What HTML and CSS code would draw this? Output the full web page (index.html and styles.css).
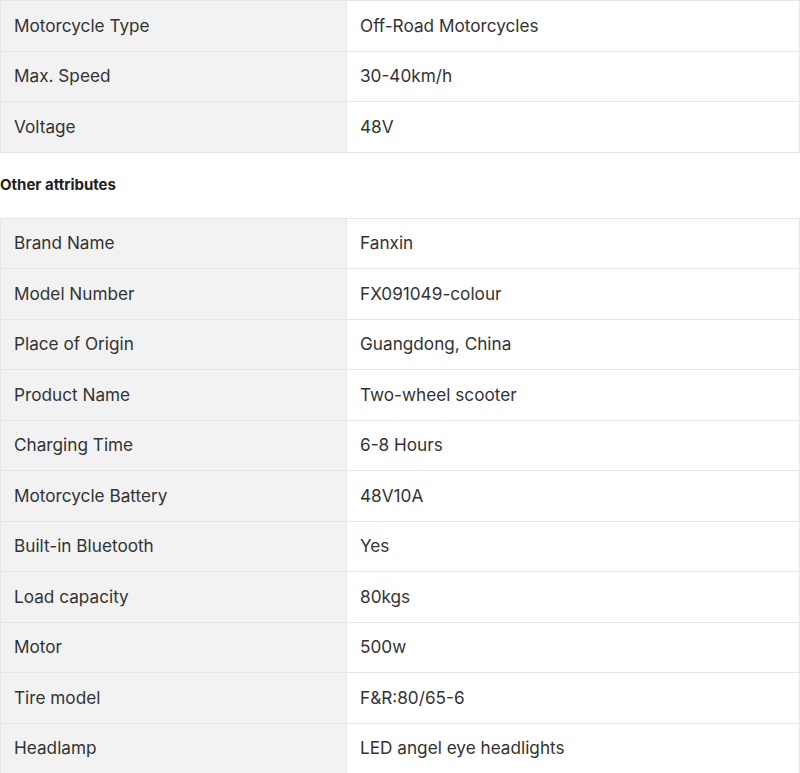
FILE: index.html
```html
<!DOCTYPE html>
<html>
<head>
<meta charset="utf-8">
<link rel="stylesheet" href="styles.css">
</head>
<body>
<table class="attrs">
  <tr><td class="k">Motorcycle Type</td><td class="v">Off-Road Motorcycles</td></tr>
  <tr><td class="k">Max. Speed</td><td class="v">30-40km/h</td></tr>
  <tr><td class="k">Voltage</td><td class="v">48V</td></tr>
</table>
<h3 class="title">Other attributes</h3>
<table class="attrs">
  <tr><td class="k">Brand Name</td><td class="v">Fanxin</td></tr>
  <tr><td class="k">Model Number</td><td class="v">FX091049-colour</td></tr>
  <tr><td class="k">Place of Origin</td><td class="v">Guangdong, China</td></tr>
  <tr><td class="k">Product Name</td><td class="v">Two-wheel scooter</td></tr>
  <tr><td class="k">Charging Time</td><td class="v">6-8 Hours</td></tr>
  <tr><td class="k">Motorcycle Battery</td><td class="v">48V10A</td></tr>
  <tr><td class="k">Built-in Bluetooth</td><td class="v">Yes</td></tr>
  <tr><td class="k">Load capacity</td><td class="v">80kgs</td></tr>
  <tr><td class="k">Motor</td><td class="v">500w</td></tr>
  <tr><td class="k">Tire model</td><td class="v">F&amp;R:80/65-6</td></tr>
  <tr><td class="k">Headlamp</td><td class="v">LED angel eye headlights</td></tr>
</table>
</body>
</html>
```

FILE: styles.css
```css
html, body {
  margin: 0;
  padding: 0;
  background: #fff;
}
body {
  font-family: Inter, "Noto Sans", sans-serif;
  color: #333;
}
.attrs {
  width: 800px;
  border-collapse: collapse;
  table-layout: fixed;
}
.attrs td {
  border: 1px solid #e6e6e6;
  height: 49.5px;
  padding: 0 13px;
  font-size: 17.2px;
  line-height: 24px;
  vertical-align: middle;
  color: #333;
}
.attrs td.k {
  width: 319px;
  background: #f2f2f2;
}
.attrs td.v {
  background: #fff;
}
.title {
  margin: 0;
  padding: 23px 0 24px;
  font-size: 15px;
  line-height: 18px;
  font-weight: 700;
  color: #222;
}
```
